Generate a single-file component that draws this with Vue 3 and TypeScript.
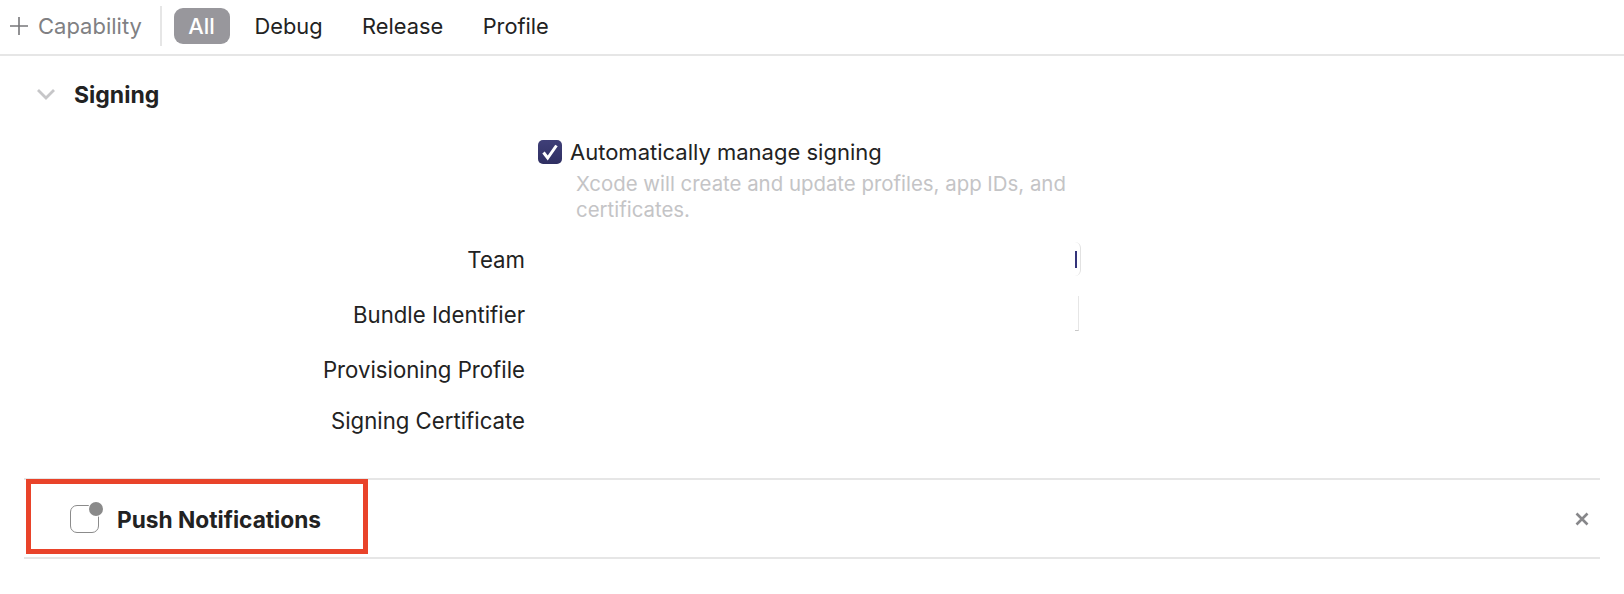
<script setup lang="ts">
const tabs = ['All', 'Debug', 'Release', 'Profile']
const rows = [
  { label: 'Team', height: 55 },
  { label: 'Bundle Identifier', height: 55 },
  { label: 'Provisioning Profile', height: 55 },
  { label: 'Signing Certificate', height: 47 },
]
</script>

<template>
  <div class="page">
    <header class="toolbar">
      <div class="add">
        <svg class="plus" width="18" height="18" viewBox="0 0 18 18">
          <path d="M9 0v18M0 9h18" stroke="#77777a" stroke-width="1.6" fill="none" />
        </svg>
        <span>Capability</span>
      </div>
      <div class="divider"></div>
      <nav class="tabs">
        <span v-for="(tab, i) in tabs" :key="tab" class="tab" :class="{ active: i === 0 }">{{ tab }}</span>
      </nav>
    </header>

    <section class="signing">
      <div class="section-title">
        <svg class="chevron" width="20" height="12" viewBox="0 0 20 12">
          <path d="M2 2l8 8 8-8" stroke="#c6c6c8" stroke-width="2.8" fill="none" />
        </svg>
        <h2>Signing</h2>
      </div>

      <div class="auto">
        <div class="check-row">
          <span class="checkbox">
            <svg width="18" height="18" viewBox="0 0 18 18">
              <path d="M2.5 9.5l4.2 5.5L15.5 2.5" stroke="#fff" stroke-width="3" fill="none" />
            </svg>
          </span>
          <span>Automatically manage signing</span>
        </div>
        <p class="hint">Xcode will create and update profiles, app IDs, and certificates.</p>
      </div>

      <div class="form">
        <div v-for="(row, i) in rows" :key="row.label" class="form-row" :style="{ height: row.height + 'px' }">
          <label>{{ row.label }}</label>
          <div class="field" :class="'field-' + i"></div>
        </div>
      </div>
    </section>

    <section class="capability">
      <div class="highlight">
        <span class="cap-icon"><i></i></span>
        <strong>Push Notifications</strong>
      </div>
      <svg class="close" width="14" height="14" viewBox="0 0 14 14">
        <path d="M1.5 1.5l11 11M12.5 1.5l-11 11" stroke="#87878a" stroke-width="2.6" fill="none" />
      </svg>
    </section>
  </div>
</template>

<style>
html, body {
  background: #fff;
}
</style>

<style scoped>
.page {
  width: 1624px;
  height: 594px;
  overflow: hidden;
  background: #fff;
  color: #222;
  font-family: Inter, "Liberation Sans", sans-serif;
  font-size: 22px;
}

.toolbar {
  display: flex;
  align-items: center;
  box-sizing: border-box;
  height: 56px;
  padding-bottom: 3px;
  border-bottom: 2px solid #e6e6e6;
}

.add {
  display: flex;
  align-items: center;
  gap: 10px;
  width: 160px;
  padding-left: 10px;
  box-sizing: border-box;
  color: #808083;
}

.divider {
  width: 2px;
  height: 40px;
  background: #e6e6e6;
}

.tabs {
  display: flex;
  align-items: center;
  gap: 39.5px;
  margin-left: 11.5px;
  font-size: 21.8px;
}

.tab {
  line-height: 36px;
}

.tab.active {
  width: 56px;
  margin-right: -14.5px;
  text-align: center;
  color: #fff;
  background: #98979c;
  border-radius: 9px;
  font-weight: 500;
}

.section-title {
  display: flex;
  align-items: center;
  gap: 18px;
  padding: 27px 0 0 36px;
}

.chevron {
  margin-bottom: 3px;
}

.section-title h2 {
  margin: 0;
  font-size: 23px;
  line-height: 24px;
  font-weight: 700;
}

.auto {
  margin: 31px 0 0 538px;
}

.check-row {
  display: flex;
  align-items: center;
  gap: 8px;
  line-height: 28px;
}

.checkbox {
  display: flex;
  align-items: center;
  justify-content: center;
  width: 24px;
  height: 24px;
  border-radius: 5px;
  background: linear-gradient(#3f3f78, #2f2f62);
}

.hint {
  width: 490px;
  margin: 5px 0 0 38px;
  font-size: 20.4px;
  line-height: 26px;
  color: #c4c4c6;
}

.form {
  margin-top: 9px;
}

.form-row {
  position: relative;
  display: flex;
  align-items: center;
}

.form-row label {
  width: 525px;
  text-align: right;
  font-size: 22.2px;
}

.field {
  position: absolute;
  left: 1075px;
}

.field-0 {
  top: 10px;
  width: 5px;
  height: 34px;
  border-right: 1px solid #e2e2e2;
  border-radius: 0 9px 9px 0;
}

.field-0::before {
  content: "";
  position: absolute;
  left: 0;
  top: 9px;
  width: 2px;
  height: 17px;
  background: #33337a;
}

.field-1 {
  top: 9px;
  width: 3px;
  height: 34px;
  border-right: 1px solid #e6e6e6;
  border-bottom: 1px solid #c8c8c8;
}

.capability {
  display: flex;
  align-items: center;
  justify-content: space-between;
  width: 1576px;
  height: 81px;
  margin: 34px 0 0 24px;
  box-sizing: border-box;
  padding-right: 11px;
  border-top: 2px solid #e6e6e6;
  border-bottom: 2px solid #e6e6e6;
}

.highlight {
  display: flex;
  align-items: center;
  gap: 18px;
  width: 342px;
  height: 75px;
  margin: -4px 0 0 2px;
  padding: 5px 0 0 39px;
  box-sizing: border-box;
  border: 5px solid #e9432a;
}

.highlight strong {
  font-size: 22.7px;
  font-weight: 700;
}

.cap-icon {
  position: relative;
  width: 29px;
  height: 28px;
  box-sizing: border-box;
  border: 1.5px solid #8b8b8b;
  border-radius: 7px;
}

.cap-icon i {
  position: absolute;
  top: -4px;
  right: -4.5px;
  width: 14px;
  height: 14px;
  border-radius: 50%;
  background: #8a8a8a;
  box-shadow: 0 0 0 1px #fff;
}
</style>
